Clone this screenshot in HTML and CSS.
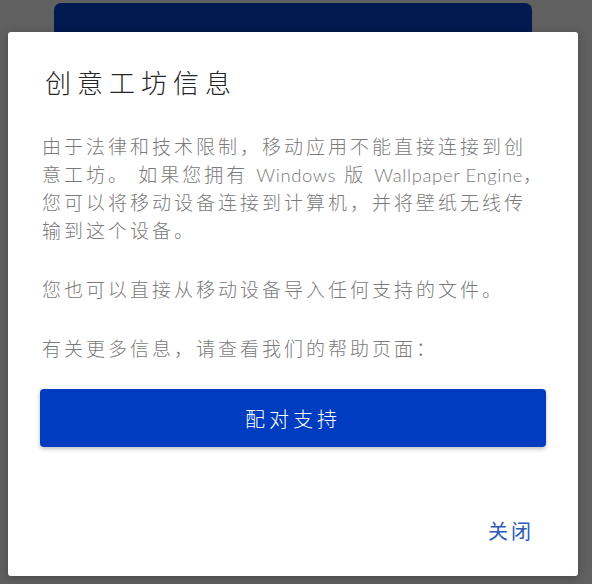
FILE: index.html
```html
<!DOCTYPE html>
<html lang="zh-CN">
<head>
    <meta charset="UTF-8">
    <meta name="viewport" content="width=device-width, initial-scale=1.0">
    <title>创意工坊信息</title>
    <link rel="stylesheet" href="styles.css">
</head>
<body>

    <!-- App behind the dialog -->
    <div class="app">
        <div class="app-card"></div>
    </div>

    <!-- Workshop info dialog -->
    <div class="dialog">
        <h2 class="dialog-title">创意工坊信息</h2>

        <div class="dialog-body">
            <p>由于法律和技术限制，移动应用不能直接连接到创意工坊。 如果您拥有 <span class="en">Windows</span> 版 <span class="en">Wallpaper Engine</span>，您可以将移动设备连接到计算机，并将壁纸无线传输到这个设备。</p>
            <p>您也可以直接从移动设备导入任何支持的文件。</p>
            <p>有关更多信息，请查看我们的帮助页面：</p>
        </div>

        <button class="pair-button">配对支持</button>

        <div class="dialog-actions">
            <button class="close-button">关闭</button>
        </div>
    </div>

</body>
</html>
```

FILE: styles.css
```css
/* Page */
body {
    margin: 0;
    padding: 0;
    background-color: #606060;
    font-family: "Lato", "Noto Sans CJK SC", sans-serif;
    height: 584px;
    overflow: hidden;
}

/* App underneath */
.app {
    padding: 3px 60px 0 54px;
}

.app-card {
    background-color: #001a4f;
    height: 120px;
    border-radius: 7px;
}

/* Dialog */
.dialog {
    position: absolute;
    top: 32px;
    left: 8px;
    width: 570px;
    height: 544px;
    background-color: #fff;
    border-radius: 3px;
    box-shadow: 0 2px 8px rgba(0, 0, 0, 0.25);
    display: flex;
    flex-direction: column;
    box-sizing: border-box;
    padding: 34px 32px 31px 32px;
}

.dialog-title {
    margin: 0 0 0 5px;
    font-size: 26px;
    line-height: 34px;
    font-weight: 300;
    letter-spacing: 6px;
    color: #262626;
}

.dialog-body {
    margin-top: 33px;
    padding-left: 2px;
}

.dialog-body p {
    margin: 0 0 31px 0;
    font-size: 19px;
    line-height: 28px;
    font-weight: 300;
    letter-spacing: 3px;
    color: #7a7a7a;
}

.dialog-body p:last-child {
    margin-bottom: 0;
}

.dialog-body .en {
    letter-spacing: 0.6px;
    font-size: 18.5px;
}

/* Pair button */
.pair-button {
    margin-top: 26px;
    height: 58px;
    border: none;
    border-radius: 4px;
    background-color: #003cc0;
    color: #fff;
    font-family: inherit;
    font-size: 20px;
    font-weight: 300;
    letter-spacing: 4px;
    box-shadow: 0 2px 4px rgba(0, 0, 0, 0.25);
    cursor: pointer;
}

/* Actions */
.dialog-actions {
    margin-top: auto;
    display: flex;
    justify-content: flex-end;
}

.close-button {
    margin-right: 12px;
    padding: 0;
    border: none;
    background: none;
    color: #2a5bb8;
    font-family: inherit;
    font-size: 20px;
    line-height: 28px;
    letter-spacing: 3px;
    cursor: pointer;
}
```
